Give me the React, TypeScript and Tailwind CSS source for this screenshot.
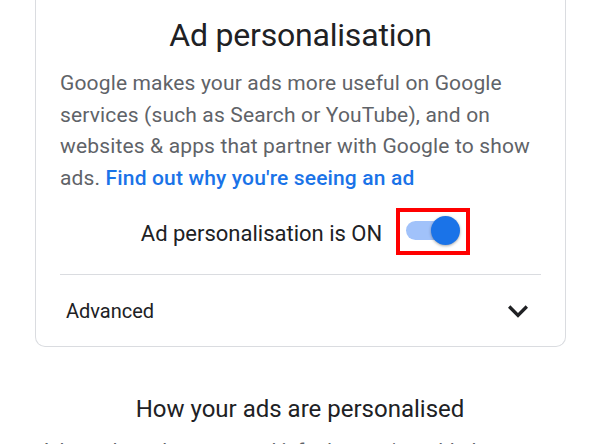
import React from "react";

export default function App() {
  return (
    <div className="w-[600px] h-[444px] overflow-hidden bg-white" style={{ fontFamily: "Roboto, 'Noto Sans', sans-serif" }}>
      <div className="ml-[35px] w-[531px] border border-t-0 border-[#dadce0] rounded-b-[10px] px-6">
        <h1 className="pt-[15px] text-center text-[32px] leading-[40px] text-[#202124] font-normal tracking-[-0.2px]">
          Ad personalisation
        </h1>
        <p className="mt-[13px] text-[21px] leading-[31.5px] tracking-[0.15px] text-[#5f6368]">
          Google makes your ads more useful on Google services (such as Search or YouTube), and on websites &amp; apps that partner with Google to show ads.{" "}
          <a className="text-[#1a73e8] font-medium">Find out why you're seeing an ad</a>
        </p>
        <div className="mt-[22px] flex items-start justify-center gap-[24px]">
          <span className="mt-[3px] text-[22px] leading-[29px] text-[#202124]">Ad personalisation is ON</span>
          <div className="relative w-[54px] h-[29px]">
            <div className="absolute left-0 top-[5px] w-[48px] h-[19px] rounded-full bg-[#a1c2fa]" />
            <div className="absolute right-0 top-0 w-[29px] h-[29px] rounded-full bg-[#1a73e8] shadow-[0_1px_3px_rgba(0,0,0,0.35)]" />
            <div className="absolute -left-[10px] -top-[8px] w-[74px] h-[47px] border-[4px] border-[#ff0000]" />
          </div>
        </div>
        <div className="mt-[26px] h-px bg-[#dadce0]" />
        <div className="h-[71px] flex items-center justify-between pl-[6px] pr-[3px]">
          <span className="text-[20px] text-[#202124]">Advanced</span>
          <svg width="40" height="40" viewBox="0 0 24 24" fill="#202124">
            <path d="M16.59 8.59L12 13.17 7.41 8.59 6 10l6 6 6-6z" />
          </svg>
        </div>
      </div>
      <h2 className="mt-[48px] text-center text-[24px] leading-[28px] text-[#202124] font-normal">
        How your ads are personalised
      </h2>
      <p className="mt-[12px] px-[40px] text-[20px] leading-[32px] text-[#5f6368]">
        Ads are based on personal info that you've added to your Google Account, data from advertisers that partner with Google and Google's estimation of your interests.
      </p>
    </div>
  );
}
